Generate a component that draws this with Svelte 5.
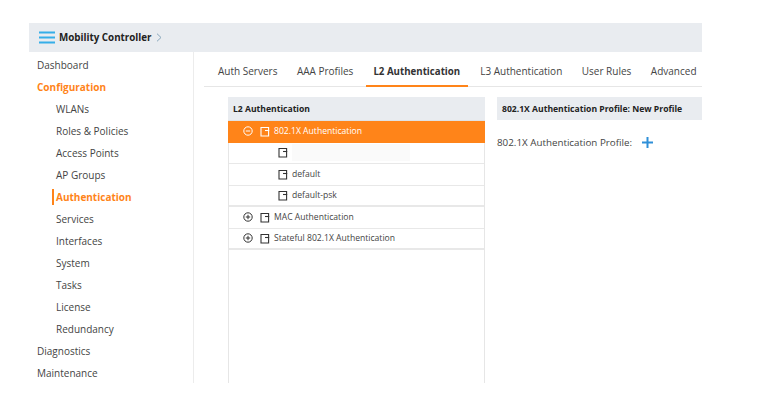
<script>
	const nav = [
		{ label: 'Dashboard' },
		{ label: 'Configuration', open: true },
		{ label: 'WLANs', sub: true },
		{ label: 'Roles & Policies', sub: true },
		{ label: 'Access Points', sub: true },
		{ label: 'AP Groups', sub: true },
		{ label: 'Authentication', sub: true, active: true },
		{ label: 'Services', sub: true },
		{ label: 'Interfaces', sub: true },
		{ label: 'System', sub: true },
		{ label: 'Tasks', sub: true },
		{ label: 'License', sub: true },
		{ label: 'Redundancy', sub: true },
		{ label: 'Diagnostics' },
		{ label: 'Maintenance' }
	];

	const tabs = ['Auth Servers', 'AAA Profiles', 'L2 Authentication', 'L3 Authentication', 'User Rules', 'Advanced'];

	const rows = [
		{ label: '802.1X Authentication', toggle: 'minus', selected: true },
		{ label: '', child: true, blank: true },
		{ label: 'default', child: true },
		{ label: 'default-psk', child: true, thick: true },
		{ label: 'MAC Authentication', toggle: 'plus' },
		{ label: 'Stateful 802.1X Authentication', toggle: 'plus', thick: true }
	];
</script>

{#snippet doc()}
	<svg class="doc" width="10" height="11" viewBox="0 0 10 11" fill="none" stroke="currentColor" stroke-width="1.1">
		<path d="M8.6 4.5V10H1V1.5h7.6V4.5" />
		<path d="M5 4.5h4.2" />
	</svg>
{/snippet}

<div class="page">
	<header class="topbar">
		<svg class="burger" width="16" height="13" viewBox="0 0 16 13" fill="#35aee8">
			<rect y="0.5" width="16" height="2" />
			<rect y="5.5" width="16" height="2" />
			<rect y="10.5" width="16" height="2" />
		</svg>
		<span class="title">Mobility Controller</span>
		<svg width="6" height="9" viewBox="0 0 6 9" fill="none" stroke="#7f9fb5" stroke-width="0.9">
			<path d="M1 0.7 5 4.5 1 8.3" />
		</svg>
	</header>

	<div class="body">
		<nav class="sidebar">
			{#each nav as item}
				<div class="nav-item" class:sub={item.sub} class:open={item.open} class:active={item.active}>
					<span>{item.label}</span>
				</div>
			{/each}
		</nav>

		<main class="content">
			<div class="tabs">
				{#each tabs as tab, i}
					<div class="tab" class:current={i === 2}>{tab}</div>
				{/each}
			</div>

			<div class="panels">
				<section class="tree">
					<div class="panel-head tree-head">L2 Authentication</div>
					{#each rows as row}
						<div class="row" class:selected={row.selected} class:child={row.child} class:thick={row.thick}>
							{#if row.toggle}
								<svg class="toggle" width="10" height="10" viewBox="0 0 10 10" fill="none" stroke="currentColor" stroke-width="1">
									<circle cx="5" cy="5" r="4.2" />
									<path d="M2.8 5h4.4" />
									{#if row.toggle === 'plus'}<path d="M5 2.8v4.4" />{/if}
								</svg>
							{/if}
							{@render doc()}
							{#if row.blank}
								<span class="blank"></span>
							{:else}
								<span class="label">{row.label}</span>
							{/if}
						</div>
					{/each}
				</section>

				<section class="detail">
					<div class="panel-head detail-head">802.1X Authentication Profile: New Profile</div>
					<div class="field">
						<span>802.1X Authentication Profile:</span>
						<svg width="11" height="11" viewBox="0 0 11 11" fill="#2f8fd8">
							<rect x="4.5" width="2" height="11" />
							<rect y="4.5" width="11" height="2" />
						</svg>
					</div>
				</section>
			</div>
		</main>
	</div>
</div>

<style>
	:global(body) {
		margin: 0;
		background: #fff;
	}

	.page {
		width: 673px;
		height: 360px;
		margin: 23px 0 0 29px;
		display: flex;
		flex-direction: column;
		font-family: 'Open Sans', sans-serif;
		font-size: 10px;
		color: #444;
	}

	.topbar {
		flex: none;
		height: 29px;
		background: #e9ecf0;
		display: flex;
		align-items: center;
		padding-left: 10px;
		gap: 4px;
	}

	.title {
		font-weight: 700;
		font-size: 9.8px;
		color: #222;
	}

	.body {
		flex: 1;
		display: flex;
		min-height: 0;
	}

	.sidebar {
		width: 164px;
		flex: none;
		border-right: 1px solid #ececec;
		padding-top: 2px;
	}

	.nav-item {
		height: 22px;
		line-height: 22px;
		padding-left: 8px;
	}

	.nav-item.open {
		color: #ff8419;
		font-weight: 700;
	}

	.nav-item.sub {
		padding-left: 27px;
	}

	.nav-item.active {
		color: #ff8419;
		font-weight: 700;
		padding-left: 23px;
	}

	.nav-item.active span {
		display: block;
		height: 16px;
		line-height: 16px;
		position: relative;
		top: 3px;
		border-left: 2px solid #ff8419;
		padding-left: 2px;
	}

	.content {
		flex: 1;
		min-width: 0;
		display: flex;
		flex-direction: column;
		padding-left: 10px;
	}

	.tabs {
		flex: none;
		height: 34px;
		display: flex;
		border-bottom: 1px solid #e6e6e6;
		padding-left: 14px;
		gap: 19.5px;
	}

	.tab {
		line-height: 39px;
		height: 34px;
		box-sizing: border-box;
		white-space: nowrap;
	}

	.tab.current {
		font-weight: 700;
		font-size: 9.7px;
		color: #333;
		border-bottom: 2px solid #ff8419;
		height: 35px;
		padding: 0 7.5px;
		margin: 0 -7px;
	}

	.panels {
		flex: 1;
		display: flex;
		min-height: 0;
		padding: 10px 0 0 24px;
		gap: 12px;
	}

	.tree {
		width: 257px;
		flex: none;
		border-left: 1px solid #e6e6e6;
		border-right: 1px solid #e6e6e6;
		box-sizing: border-box;
	}

	.panel-head {
		height: 23px;
		line-height: 24px;
		background: #e9ecf0;
		font-weight: 700;
		font-size: 8.6px;
		color: #222;
	}

	.tree-head {
		margin: 0 -1px;
		padding-left: 5px;
		border-bottom: 1px solid #dfe2e6;
	}

	.row {
		height: 21.5px;
		box-sizing: border-box;
		display: flex;
		align-items: center;
		padding-left: 14px;
		border-bottom: 1px solid #e8e8e8;
		font-size: 8.6px;
		color: #444;
	}

	.row.thick {
		border-bottom-width: 2px;
	}

	.row.selected {
		background: #ff8419;
		color: #fff;
		border-color: #ff8419;
		margin: 0 -1px;
		padding-left: 15px;
	}

	.row.child {
		padding-left: 42px;
	}

	.doc {
		margin-left: 7px;
		flex: none;
		color: #333;
	}

	.row.selected .doc {
		color: #fff;
	}

	.toggle {
		flex: none;
		color: #333;
	}

	.row.selected .toggle {
		color: #fff;
	}

	.label {
		margin-left: 4px;
	}

	.blank {
		width: 118px;
		height: 17px;
		margin-left: 4px;
		background: #fafafa;
	}

	.detail {
		flex: 1;
		min-width: 0;
	}

	.detail-head {
		padding-left: 5px;
	}

	.field {
		display: flex;
		align-items: center;
		gap: 10px;
		margin-top: 14px;
		height: 16px;
		font-size: 9.8px;
	}
</style>
